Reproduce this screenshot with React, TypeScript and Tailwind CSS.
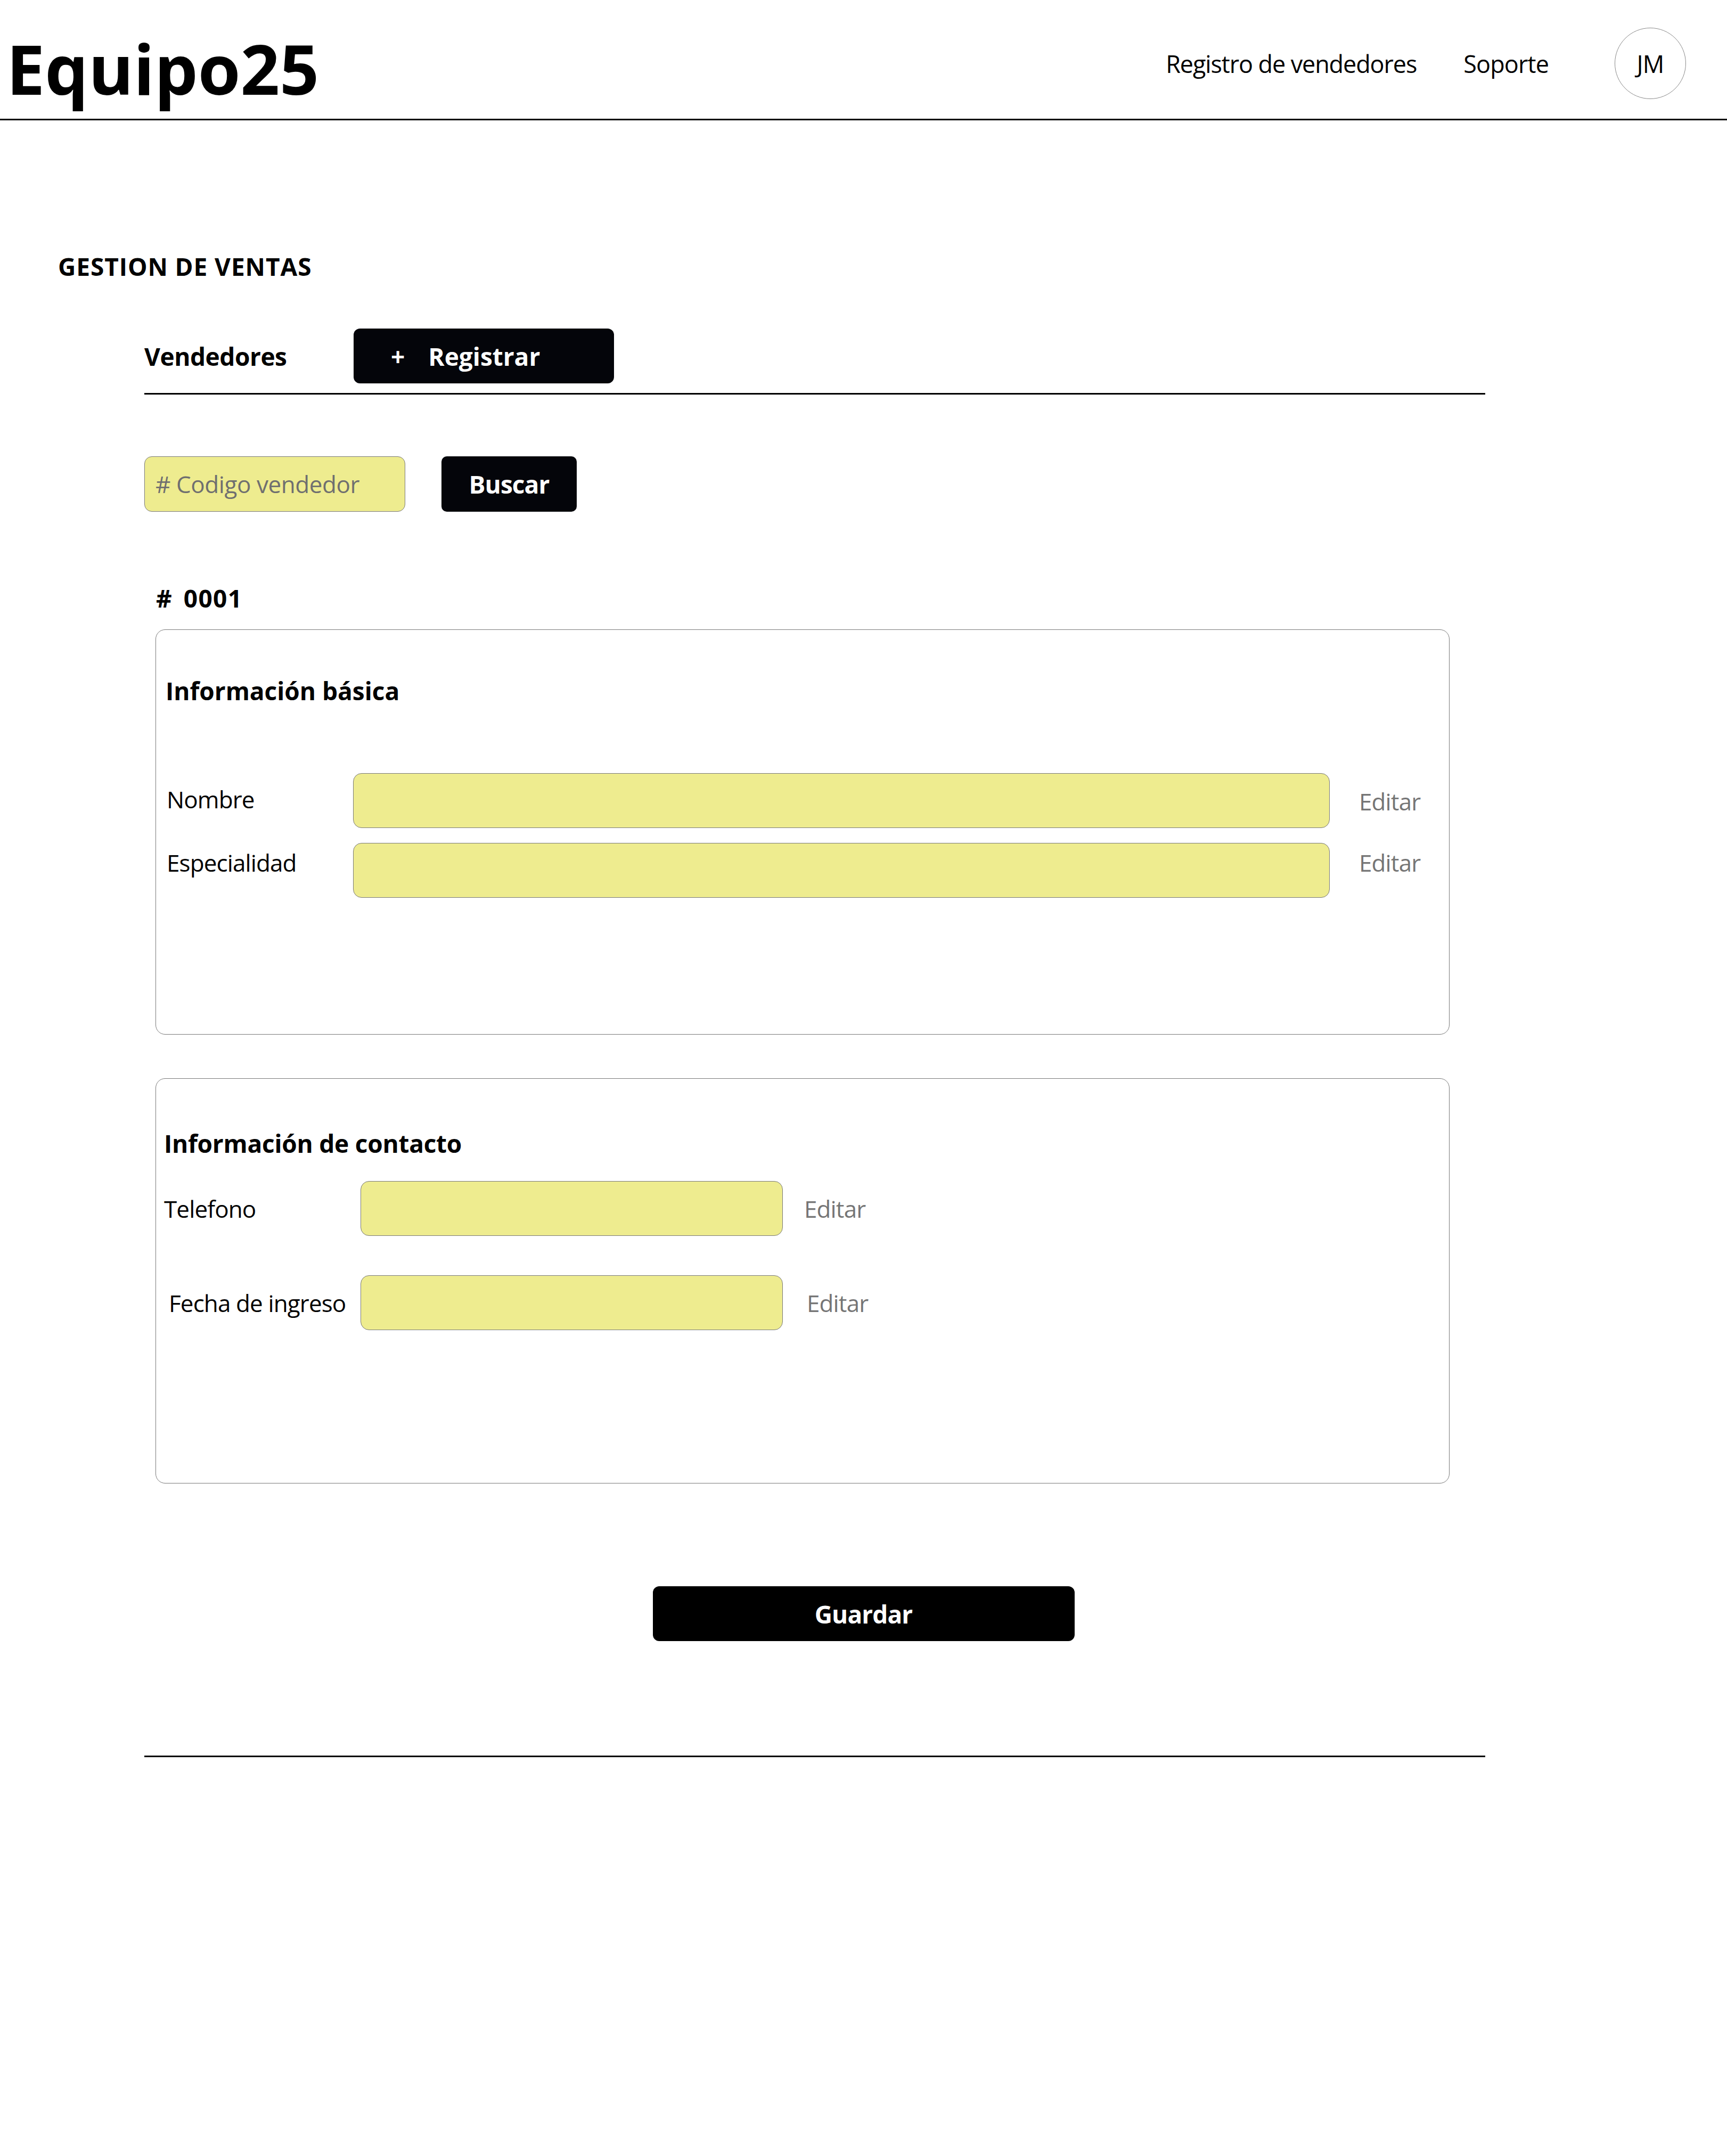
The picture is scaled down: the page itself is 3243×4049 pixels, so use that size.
import { ReactNode } from "react"

const font = "font-['Open_Sans','Noto_Sans',sans-serif]"

interface FieldProps {
  label: string
  labelClass?: string
  inputClass: string
  editClass?: string
  rowClass?: string
}

const Field = ({ label, labelClass, inputClass, editClass, rowClass }: FieldProps) => {
  return (
    <div className={`flex ${rowClass ?? "items-center"}`}>
      <span className={`text-[44px] leading-none tracking-[-0.02em] text-black ${labelClass ?? ""}`}>{label}</span>
      <div className={`h-[103px] shrink-0 rounded-[16px] border border-[#7a7a7a] bg-[#eeec8f] ${inputClass}`} />
      <span className={`text-[44px] leading-none tracking-[-0.02em] text-[#757575] ${editClass ?? ""}`}>Editar</span>
    </div>
  )
}

const Card = ({ children, className }: { children: ReactNode, className?: string }) => (
  <div className={`w-[2430px] h-[761px] rounded-[18px] border border-[#7a7a7a] ${className ?? ""}`}>
    {children}
  </div>
)

export default function App() {
  return (
    <div className={`${font} min-h-[4049px] w-full bg-white text-black`}>
      <header className="flex h-[226px] items-start justify-between border-b-[3px] border-black">
        <div className="ml-[12px] mt-[64px] text-[129px] font-bold leading-none tracking-normal">Equipo25</div>
        <nav className="mr-[77px] mt-[52px] flex items-center">
          <a className="text-[45px] leading-none tracking-[-0.025em]">Registro de vendedores</a>
          <a className="ml-[88px] text-[45px] leading-none tracking-[-0.02em]">Soporte</a>
          <div className="ml-[124px] flex h-[134px] w-[134px] items-center justify-center rounded-full border border-[#8a8a8a] text-[45px] leading-none tracking-[-0.02em]">
            JM
          </div>
        </nav>
      </header>

      <main>
        <h1 className="ml-[109px] mt-[251px] text-[46px] font-bold leading-none tracking-[0.02em]">GESTION DE VENTAS</h1>

        <div className="ml-[271px] mt-[94px] w-[2518px]">
          <div className="flex items-center">
            <span className="w-[393px] text-[46px] font-bold leading-none tracking-[-0.01em]">Vendedores</span>
            <button className="flex h-[103px] w-[489px] items-center rounded-[12px] bg-[#04050a] pl-[70px] text-[46px] font-bold leading-none tracking-normal text-white">
              <span>+</span>
              <span className="ml-[44px]">Registrar</span>
            </button>
          </div>
          <div className="mt-[18px] h-[3px] bg-black" />

          <div className="mt-[116px] flex items-center">
            <div className="flex h-[104px] w-[490px] items-center rounded-[14px] border border-[#7a7a7a] bg-[#eeec8f] pl-[20px] text-[44px] leading-none tracking-[-0.01em] text-[#6f6f6f]">
              # Codigo vendedor
            </div>
            <button className="ml-[68px] flex h-[104px] w-[254px] items-center justify-center rounded-[10px] bg-[#04050a] text-[46px] font-bold leading-none tracking-[-0.02em] text-white">
              Buscar
            </button>
          </div>
        </div>

        <div className="ml-[292px]">
          <div className="ml-[1px] mt-[139px] flex text-[46px] font-bold leading-none tracking-normal">
            <span>#</span>
            <span className="ml-[22px] tracking-[0.03em]">0001</span>
          </div>

          <Card className="mt-[36px]">
            <div className="ml-[18px] mt-[91px] text-[46px] font-bold leading-none tracking-normal">Información básica</div>
            <div className="mt-[132px] flex flex-col gap-[28px] pl-[20px]">
              <Field label="Nombre" labelClass="w-[350px] -mt-[6px]" inputClass="w-[1834px]" editClass="ml-[55px] mt-[2px]" />
              <Field
                label="Especialidad"
                rowClass="items-start"
                labelClass="mt-[15px] w-[350px]"
                inputClass="w-[1834px]"
                editClass="ml-[55px] mt-[15px]"
              />
            </div>
          </Card>

          <Card className="mt-[82px]">
            <div className="ml-[15px] mt-[98px] text-[46px] font-bold leading-none tracking-[-0.005em]">Información de contacto</div>
            <div className="mt-[48px] flex flex-col gap-[74px] pl-[15px]">
              <Field label="Telefono" labelClass="w-[369px]" inputClass="w-[793px]" editClass="ml-[40px]" />
              <Field label="Fecha de ingreso" labelClass="ml-[9px] w-[360px]" inputClass="w-[793px]" editClass="ml-[45px]" />
            </div>
          </Card>
        </div>

        <div className="mt-[193px] flex justify-center">
          <button className="flex h-[103px] w-[792px] items-center justify-center rounded-[12px] bg-black text-[46px] font-bold leading-none tracking-[-0.02em] text-white">
            Guardar
          </button>
        </div>

        <div className="ml-[271px] mt-[215px] h-[3px] w-[2518px] bg-black" />
      </main>
    </div>
  )
}
